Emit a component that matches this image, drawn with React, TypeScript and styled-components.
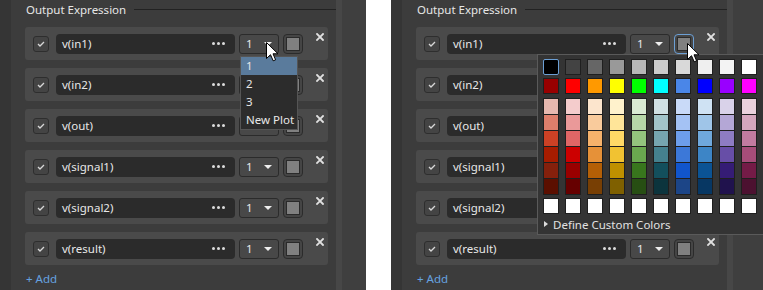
import React from 'react';
import styled, { createGlobalStyle } from 'styled-components';

const GlobalStyle = createGlobalStyle`
  html, body {
    margin: 0;
    padding: 0;
    background: #ffffff;
  }
  body {
    font-family: "Noto Sans", "Open Sans", "Liberation Sans", sans-serif;
  }
`;

const Page = styled.div`
  display: flex;
  width: 763px;
  height: 290px;
  overflow: hidden;
  background: #ffffff;
`;

const Shot = styled.div<{ $width: number }>`
  position: relative;
  display: flex;
  flex-shrink: 0;
  width: ${(p) => p.$width}px;
  height: 290px;
  overflow: hidden;
  background: #3c3c3c;
`;

const EdgeStrip = styled.div`
  width: 11px;
  flex-shrink: 0;
  background: #353535;
`;

const SideLight = styled.div`
  width: 6px;
  flex-shrink: 0;
  background: #474747;
`;

const SideDark = styled.div`
  flex: 1;
  background: #3f3f3f;
`;

const Gap = styled.div`
  width: 25px;
  flex-shrink: 0;
  background: #ffffff;
`;

const Panel = styled.div`
  width: 325px;
  flex-shrink: 0;
  box-sizing: border-box;
  padding: 0 8px 0 14px;
  background: #3c3c3c;
`;

const Header = styled.div`
  display: flex;
  align-items: center;
  height: 18px;
  margin-right: -8px;
`;

const HeaderTitle = styled.span`
  font-size: 11.5px;
  color: #e6e6e6;
  padding-left: 1px;
`;

const HeaderRule = styled.div`
  flex: 1;
  height: 1px;
  margin-left: 8px;
  background: #222222;
`;

const List = styled.div`
  display: flex;
  flex-direction: column;
  gap: 8px;
  margin-top: 9px;
`;

const Card = styled.div`
  display: flex;
  align-items: center;
  height: 33px;
  box-sizing: border-box;
  padding: 0 4px 0 8px;
  border-radius: 3px;
  background: #4a4a4a;
`;

const Check = styled.div`
  display: flex;
  align-items: center;
  justify-content: center;
  width: 16px;
  height: 16px;
  box-sizing: border-box;
  border: 1px solid #2e2e2e;
  border-radius: 3px;
  background: #444444;
  margin-right: 7px;
`;

const Field = styled.div`
  display: flex;
  align-items: center;
  justify-content: space-between;
  width: 179px;
  height: 20px;
  box-sizing: border-box;
  padding: 0 10px 0 6px;
  border-radius: 4px;
  background: #2b2b2b;
  font-size: 11.5px;
  color: #e8e8e8;
`;

const Dots = styled.div`
  display: flex;
  gap: 2px;

  span {
    width: 3px;
    height: 3px;
    border-radius: 50%;
    background: #dddddd;
  }
`;

const Select = styled.div`
  position: relative;
  display: flex;
  align-items: center;
  justify-content: space-between;
  width: 40px;
  height: 20px;
  box-sizing: border-box;
  margin-left: 4px;
  padding: 0 6px 0 6px;
  border: 1px solid #2b2b2b;
  border-radius: 3px;
  background: #484848;
  font-size: 11.5px;
  color: #e8e8e8;
`;

const Caret = styled.div`
  width: 0;
  height: 0;
  border-left: 4px solid transparent;
  border-right: 4px solid transparent;
  border-top: 4px solid #eeeeee;
`;

const Swatch = styled.div<{ $focused?: boolean }>`
  position: relative;
  display: flex;
  align-items: center;
  justify-content: center;
  width: 20px;
  height: 20px;
  box-sizing: border-box;
  margin-left: 4px;
  border: 1px solid ${(p) => (p.$focused ? '#6c9fd4' : '#2b2b2b')};
  border-radius: 4px;
  background: #454545;
`;

const SwatchFill = styled.div`
  width: 14px;
  height: 14px;
  box-sizing: border-box;
  border: 1px solid #2a2a2a;
  background: #808080;
`;

const Close = styled.div`
  align-self: flex-start;
  margin: 6px 0 0 auto;
  width: 8px;
  height: 8px;
  display: flex;
`;

const AddLink = styled.div`
  margin-top: 7px;
  padding-left: 1px;
  font-size: 11.5px;
  line-height: 14px;
  color: #66a3e0;
`;

const Menu = styled.div`
  position: absolute;
  z-index: 5;
  top: 21px;
  left: 0;
  width: 58px;
  box-sizing: border-box;
  border: 1px solid #555555;
  background: #2c2c2c;
`;

const MenuItem = styled.div<{ $active?: boolean }>`
  height: 18px;
  line-height: 18px;
  padding-left: 5px;
  font-size: 11.5px;
  color: #e8e8e8;
  background: ${(p) => (p.$active ? '#5a7b9c' : 'transparent')};
  white-space: nowrap;
`;

const Palette = styled.div`
  position: absolute;
  z-index: 5;
  top: 19px;
  left: -138px;
  width: 240px;
  box-sizing: border-box;
  padding: 4px 0 0 5px;
  border: 1px solid #5a5a5a;
  background: #343434;
`;

const PaletteGrid = styled.div`
  display: grid;
  grid-template-columns: repeat(10, 16px);
  column-gap: 6px;
  row-gap: 3px;
`;

const Chip = styled.div<{ $color: string; $selected?: boolean }>`
  width: 16px;
  height: 16px;
  box-sizing: border-box;
  border: 1px solid ${(p) => (p.$selected ? '#6c9fd4' : '#1f1f1f')};
  border-radius: ${(p) => (p.$selected ? '2px' : '0')};
  background: ${(p) => p.$color};
`;

const ShadeColumn = styled.div`
  display: flex;
  flex-direction: column;
  margin-top: 1px;
  border: 1px solid #1f1f1f;
  background: #1f1f1f;
  gap: 1px;
`;

const Shade = styled.div<{ $color: string }>`
  height: 15px;
  background: ${(p) => p.$color};
`;

const CustomRow = styled.div`
  display: flex;
  align-items: center;
  height: 19px;
  margin-top: 1px;
  font-size: 11.5px;
  color: #e2e2e2;
  gap: 5px;
`;

const Tri = styled.div`
  width: 0;
  height: 0;
  margin-left: 1px;
  border-top: 3px solid transparent;
  border-bottom: 3px solid transparent;
  border-left: 4px solid #dddddd;
`;

const Pointer = styled.svg<{ $x: number; $y: number }>`
  position: absolute;
  z-index: 10;
  left: ${(p) => p.$x}px;
  top: ${(p) => p.$y}px;
`;

const greys = ['#000000', '#434343', '#666666', '#999999', '#b7b7b7', '#cccccc', '#d9d9d9', '#efefef', '#f3f3f3', '#ffffff'];
const brights = ['#980000', '#ff0000', '#ff9900', '#ffff00', '#00ff00', '#00ffff', '#4a86e8', '#0000ff', '#9900ff', '#ff00ff'];
const shades = [
  ['#e6b8af', '#f4cccc', '#fce5cd', '#fff2cc', '#d9ead3', '#d0e0e3', '#c9daf8', '#cfe2f3', '#d9d2e9', '#ead1dc'],
  ['#dd7e6b', '#ea9999', '#f9cb9c', '#ffe599', '#b6d7a8', '#a2c4c9', '#a4c2f4', '#9fc5e8', '#b4a7d6', '#d5a6bd'],
  ['#cc4125', '#e06666', '#f6b26b', '#ffd966', '#93c47d', '#76a5af', '#6d9eeb', '#6fa8dc', '#8e7cc3', '#c27ba0'],
  ['#a61c00', '#cc0000', '#e69138', '#f1c232', '#6aa84f', '#45818e', '#3c78d8', '#3d85c6', '#674ea7', '#a64d79'],
  ['#85200c', '#990000', '#b45f06', '#bf9000', '#38761d', '#134f5c', '#1155cc', '#0b5394', '#351c75', '#741b47'],
  ['#5b0f00', '#660000', '#783f04', '#7f6000', '#274e13', '#0c343d', '#1c4587', '#073763', '#20124d', '#4c1130'],
];

const signals = ['v(in1)', 'v(in2)', 'v(out)', 'v(signal1)', 'v(signal2)', 'v(result)'];

const CheckMark = () => (
  <svg width="8" height="6" viewBox="0 0 8 6">
    <path d="M1 3 L3 5 L7 1" fill="none" stroke="#d8d8d8" strokeWidth="1.3" />
  </svg>
);

const CloseIcon = () => (
  <svg width="8" height="8" viewBox="0 0 8 8">
    <path d="M1 1 L7 7 M7 1 L1 7" stroke="#e0e0e0" strokeWidth="1.8" strokeLinecap="square" />
  </svg>
);

const Cursor = ({ x, y }: { x: number; y: number }) => (
  <Pointer $x={x} $y={y} width="13" height="20" viewBox="0 0 13 20">
    <path
      d="M0.5 0.5 L0.5 16.5 L4.5 12.7 L7.2 18.8 L9.6 17.8 L7 11.8 L12 11.8 Z"
      fill="#ffffff"
      stroke="#000000"
      strokeWidth="1"
      strokeLinejoin="miter"
    />
  </Pointer>
);

const PlotMenu = () => (
  <Menu>
    <MenuItem $active>1</MenuItem>
    <MenuItem>2</MenuItem>
    <MenuItem>3</MenuItem>
    <MenuItem>New Plot</MenuItem>
  </Menu>
);

const ColorPalette = () => (
  <Palette>
    <PaletteGrid>
      {greys.map((c, i) => (
        <Chip key={'g' + i} $color={c} $selected={i === 0} />
      ))}
      {brights.map((c, i) => (
        <Chip key={'b' + i} $color={c} />
      ))}
      {brights.map((_, col) => (
        <ShadeColumn key={'s' + col}>
          {shades.map((row, r) => (
            <Shade key={r} $color={row[col]} />
          ))}
        </ShadeColumn>
      ))}
      {brights.map((_, i) => (
        <Chip key={'w' + i} $color="#ffffff" />
      ))}
    </PaletteGrid>
    <CustomRow>
      <Tri />
      Define Custom Colors
    </CustomRow>
  </Palette>
);

const OutputPanel = ({ mode }: { mode: 'menu' | 'palette' }) => (
  <Panel>
    <Header>
      <HeaderTitle>Output Expression</HeaderTitle>
      <HeaderRule />
    </Header>
    <List>
      {signals.map((s, i) => (
        <Card key={s}>
          <Check>
            <CheckMark />
          </Check>
          <Field>
            {s}
            <Dots>
              <span />
              <span />
              <span />
            </Dots>
          </Field>
          <Select>
            {/* the open menu hides the values of the two selects below it */}
            {mode === 'menu' && (i === 1 || i === 2) ? '' : '1'}
            <Caret />
            {mode === 'menu' && i === 0 && <PlotMenu />}
          </Select>
          <Swatch $focused={mode === 'palette' && i === 0}>
            <SwatchFill />
            {mode === 'palette' && i === 0 && <ColorPalette />}
          </Swatch>
          <Close>
            <CloseIcon />
          </Close>
        </Card>
      ))}
    </List>
    <AddLink>+ Add</AddLink>
  </Panel>
);

export default function App() {
  return (
    <Page>
      <GlobalStyle />
      <Shot $width={366}>
        <EdgeStrip />
        <OutputPanel mode="menu" />
        <SideLight />
        <SideDark />
        <Cursor x={266} y={42} />
      </Shot>
      <Gap />
      <Shot $width={372}>
        <EdgeStrip />
        <OutputPanel mode="palette" />
        <SideLight />
        <SideDark />
        <Cursor x={296} y={43} />
      </Shot>
    </Page>
  );
}
